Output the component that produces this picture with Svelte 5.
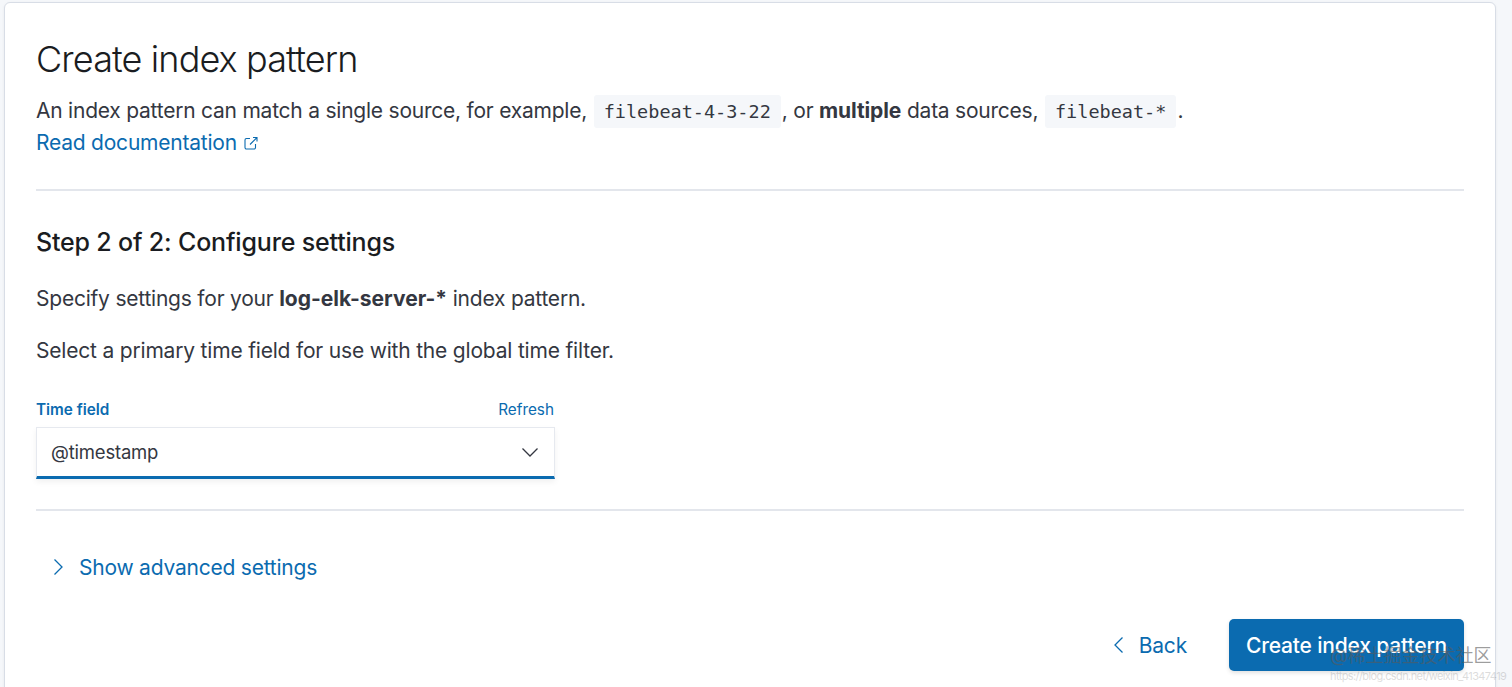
<script lang="ts">
  let timeField = $state("@timestamp");
</script>

<div class="page">
  <div class="card">
    <h1>Create index pattern</h1>
    <p class="intro">
      An index pattern can match a single source, for example, <code>filebeat-4-3-22</code>, or <strong>multiple</strong> data sources, <code>filebeat-*</code>.
    </p>
    <a class="doc-link" href="#docs">
      Read documentation
      <svg width="16" height="16" viewBox="0 0 16 16" fill="none" stroke="currentColor" stroke-width="1.1">
        <path d="M7 3.5H3.5a1.5 1.5 0 0 0-1.5 1.5v7.5A1.5 1.5 0 0 0 3.5 14H11a1.5 1.5 0 0 0 1.5-1.5V9" />
        <path d="M7 9.5 14 2.5M10 2.5h4v4" />
      </svg>
    </a>
    <hr class="first" />

    <h2>Step 2 of 2: Configure settings</h2>
    <p class="spec">Specify settings for your <strong>log-elk-server-*</strong> index pattern.</p>
    <p class="select-hint">Select a primary time field for use with the global time filter.</p>

    <div class="field">
      <div class="field-labels">
        <span class="label">Time field</span>
        <a class="refresh" href="#refresh">Refresh</a>
      </div>
      <div class="select">
        <span>{timeField}</span>
        <svg width="18" height="11" viewBox="0 0 18 11" fill="none" stroke="#343741" stroke-width="1.3">
          <path d="M1.5 1.5 9 9l7.5-7.5" />
        </svg>
      </div>
    </div>
    <hr class="second" />

    <button class="advanced">
      <svg width="11" height="18" viewBox="0 0 11 18" fill="none" stroke="currentColor" stroke-width="1.3">
        <path d="M1.5 1.5 9 9l-7.5 7.5" />
      </svg>
      Show advanced settings
    </button>

    <div class="actions">
      <button class="back">
        <svg width="11" height="18" viewBox="0 0 11 18" fill="none" stroke="currentColor" stroke-width="1.3">
          <path d="M9.5 1.5 2 9l7.5 7.5" />
        </svg>
        Back
      </button>
      <button class="create">Create index pattern</button>
    </div>
  </div>
  <div class="watermark">
    <div class="wm-main">@稀土掘金技术社区</div>
    <div class="wm-sub">https://blog.csdn.net/weixin_41347419</div>
  </div>
</div>

<style>
  :global(body) {
    margin: 0;
    background: #f5f7fa;
    overflow: hidden;
  }
  .page {
    position: relative;
    height: 687px;
    overflow: hidden;
    padding: 2px 16px 0 4px;
    box-sizing: border-box;
    font-family: Inter, "Noto Sans CJK SC", sans-serif;
    color: #343741;
  }
  .card {
    background: #fff;
    border: 1px solid #d8dde6;
    border-radius: 6px;
    padding: 36px 31px 0;
    height: 720px;
    box-sizing: border-box;
    box-shadow: 0 1px 3px rgba(0, 0, 0, 0.06);
  }
  h1 {
    margin: 0;
    font-size: 36px;
    line-height: 41px;
    font-weight: 300;
    letter-spacing: -0.88px;
    color: #1a1c21;
  }
  .intro {
    margin: 14px 0 0;
    font-size: 21px;
    line-height: 34px;
    letter-spacing: -0.23px;
    white-space: nowrap;
  }
  .intro strong {
    letter-spacing: -0.1px;
  }
  code {
    font-family: "DejaVu Sans Mono", monospace;
    font-size: 18.5px;
    letter-spacing: 0;
    background: #f5f7fa;
    padding: 6px 10px;
    margin: 0 1px 0 1px;
    color: #343741;
    border-radius: 3px;
  }
  strong {
    font-weight: 700;
    letter-spacing: 0;
  }
  .doc-link {
    display: flex;
    align-items: center;
    gap: 6px;
    margin-top: -1px;
    color: #0b6bb0;
    font-size: 21px;
    line-height: 30px;
    letter-spacing: -0.22px;
    text-decoration: none;
  }
  hr {
    border: none;
    border-top: 2px solid #e3e6ec;
    margin: 0;
  }
  hr.first {
    margin-top: 31px;
  }
  h2 {
    margin: 34px 0 0;
    font-size: 25px;
    line-height: 34px;
    font-weight: 500;
    letter-spacing: -0.17px;
    color: #1a1c21;
  }
  .spec {
    margin: 25px 0 0;
    font-size: 21px;
    line-height: 30px;
    letter-spacing: -0.22px;
  }
  .select-hint {
    margin: 22px 0 0;
    font-size: 21px;
    line-height: 30px;
    letter-spacing: -0.19px;
  }
  .field {
    width: 519px;
    margin-top: 32px;
  }
  .field-labels {
    display: flex;
    justify-content: space-between;
    align-items: center;
    height: 23px;
    font-size: 15.3px;
    padding-right: 1px;
  }
  .label {
    font-weight: 600;
    color: #0b6bb0;
  }
  .refresh {
    color: #0b6bb0;
    text-decoration: none;
  }
  .select {
    margin-top: 6px;
    height: 52px;
    box-sizing: border-box;
    border: 1px solid #e6e9ef;
    border-bottom: 3px solid #0b6bb0;
    display: flex;
    align-items: center;
    justify-content: space-between;
    padding: 0 15px 0 14px;
    font-size: 18.5px;
    letter-spacing: -0.2px;
    box-shadow: 0 3px 6px rgba(0, 0, 0, 0.06);
  }
  hr.second {
    margin-top: 30px;
  }
  button {
    font-family: inherit;
    border: none;
    background: none;
    cursor: pointer;
    padding: 0;
  }
  .advanced {
    display: flex;
    align-items: center;
    gap: 15px;
    margin: 41px 0 0 17px;
    height: 30px;
    color: #0b6bb0;
    font-size: 21px;
    letter-spacing: -0.22px;
  }
  .actions {
    display: flex;
    justify-content: flex-end;
    align-items: center;
    gap: 42px;
    margin-top: 37px;
  }
  .back {
    display: flex;
    align-items: center;
    gap: 15px;
    color: #0b6bb0;
    font-size: 21px;
    letter-spacing: -0.2px;
  }
  .create {
    width: 235px;
    height: 52px;
    border-radius: 5px;
    background: #0b6bb0;
    color: #fff;
    font-size: 21px;
    font-weight: 500;
    letter-spacing: -0.17px;
    box-shadow: 0 2px 4px rgba(0, 0, 0, 0.12);
  }
  .watermark {
    position: absolute;
    left: 1330px;
    top: 644px;
    color: rgba(90, 90, 90, 0.6);
    white-space: nowrap;
  }
  .wm-main {
    font-size: 18px;
    line-height: 24px;
  }
  .wm-sub {
    font-size: 11px;
    line-height: 14px;
    letter-spacing: -0.6px;
    margin-top: 1px;
    opacity: 0.35;
  }
</style>
